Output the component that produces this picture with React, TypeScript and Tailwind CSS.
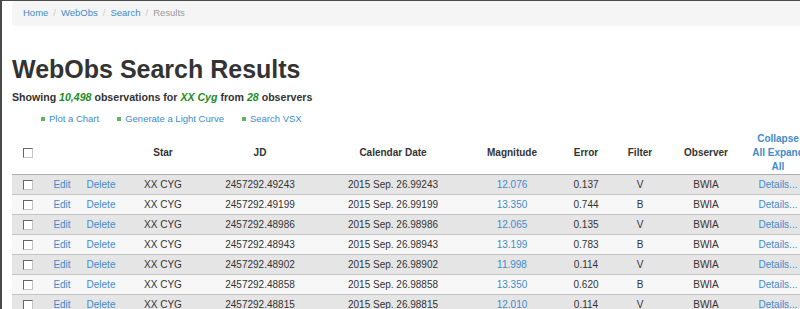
const rows = [
  { jd: "2457292.49243", date: "2015 Sep. 26.99243", mag: "12.076", err: "0.137", filter: "V" },
  { jd: "2457292.49199", date: "2015 Sep. 26.99199", mag: "13.350", err: "0.744", filter: "B" },
  { jd: "2457292.48986", date: "2015 Sep. 26.98986", mag: "12.065", err: "0.135", filter: "V" },
  { jd: "2457292.48943", date: "2015 Sep. 26.98943", mag: "13.199", err: "0.783", filter: "B" },
  { jd: "2457292.48902", date: "2015 Sep. 26.98902", mag: "11.998", err: "0.114", filter: "V" },
  { jd: "2457292.48858", date: "2015 Sep. 26.98858", mag: "13.350", err: "0.620", filter: "B" },
  { jd: "2457292.48815", date: "2015 Sep. 26.98815", mag: "12.010", err: "0.114", filter: "V" },
];

function Box() {
  return (
    <span className="inline-block h-[10px] w-[10px] border border-t-[#666] border-l-[#666] border-r-[#c4c4c4] border-b-[#c4c4c4] bg-white align-middle" />
  );
}

function Breadcrumb() {
  const sep = <span className="mx-[5px] text-[#ccc]">/</span>;
  return (
    <div className="flex h-[25px] items-center rounded-l-[3px] bg-[#f5f5f5] pl-[11px] text-[9.5px]">
      <a className="text-[#428bca]">Home</a>
      {sep}
      <a className="text-[#428bca]">WebObs</a>
      {sep}
      <a className="text-[#428bca]">Search</a>
      {sep}
      <span className="text-[#999]">Results</span>
    </div>
  );
}

function Links() {
  const items = ["Plot a Chart", "Generate a Light Curve", "Search VSX"];
  return (
    <ul className="ml-[29px] mt-[8px] flex gap-[18px] text-[9.5px] leading-[14px]">
      {items.map((label) => (
        <li key={label} className="flex items-center gap-[4px]">
          <span className="h-[4px] w-[4px] bg-[#5cb85c]" />
          <a className="text-[#428bca]">{label}</a>
        </li>
      ))}
    </ul>
  );
}

export default function App() {
  const th = "px-0 pt-[2px] align-middle font-bold leading-[14px] text-center";
  const td = "h-[20px] p-0 border-b border-[#c4c4c4] text-center leading-[19px]";
  return (
    <div className="h-[309px] w-[800px] overflow-hidden border-l-2 border-t border-[#4a4a4a] bg-white font-['Liberation_Sans',Arial,sans-serif] text-[#333]">
      <div className="pl-[10px]">
        <Breadcrumb />
        <h1 className="mt-[31px] text-[25px] font-bold leading-[25px] text-[#333]">
          WebObs Search Results
        </h1>
        <p className="mt-[8px] text-[10.6px] font-bold leading-[14px]">
          Showing <i className="text-[#1c8c1c]">10,498</i> observations for{" "}
          <i className="text-[#1c8c1c]">XX Cyg</i> from{" "}
          <i className="text-[#1c8c1c]">28</i> observers
        </p>
        <Links />
        <table className="mt-[4px] w-[794px] table-fixed border-collapse text-[10px]">
          <colgroup>
            <col className="w-[32px]" />
            <col className="w-[36px]" />
            <col className="w-[42px]" />
            <col className="w-[82px]" />
            <col className="w-[112px]" />
            <col className="w-[154px]" />
            <col className="w-[84px]" />
            <col className="w-[64px]" />
            <col className="w-[44px]" />
            <col className="w-[88px]" />
            <col className="w-[56px]" />
          </colgroup>
          <thead>
            <tr className="border-b border-[#b0b0b0]">
              <th className={th}>
                <Box />
              </th>
              <th className={th}></th>
              <th className={th}></th>
              <th className={th}>Star</th>
              <th className={th}>JD</th>
              <th className={th}>Calendar Date</th>
              <th className={th}>Magnitude</th>
              <th className={th}>Error</th>
              <th className={th}>Filter</th>
              <th className={th}>Observer</th>
              <th className={th}>
                <a className="text-[#428bca]">Collapse All</a>{" "}
                <a className="text-[#428bca]">Expand All</a>
              </th>
            </tr>
          </thead>
          <tbody>
            {rows.map((r, i) => (
              <tr key={r.jd} className={i % 2 === 0 ? "bg-[#e5e5e5]" : "bg-[#f7f7f7]"}>
                <td className={td}>
                  <Box />
                </td>
                <td className={td}>
                  <a className="text-[#428bca]">Edit</a>
                </td>
                <td className={td}>
                  <a className="text-[#428bca]">Delete</a>
                </td>
                <td className={td}>XX CYG</td>
                <td className={td}>{r.jd}</td>
                <td className={td}>{r.date}</td>
                <td className={td}>
                  <a className="text-[#428bca]">{r.mag}</a>
                </td>
                <td className={td}>{r.err}</td>
                <td className={td}>{r.filter}</td>
                <td className={td}>BWIA</td>
                <td className={td}>
                  <a className="text-[#428bca]">Details...</a>
                </td>
              </tr>
            ))}
          </tbody>
        </table>
      </div>
    </div>
  );
}
